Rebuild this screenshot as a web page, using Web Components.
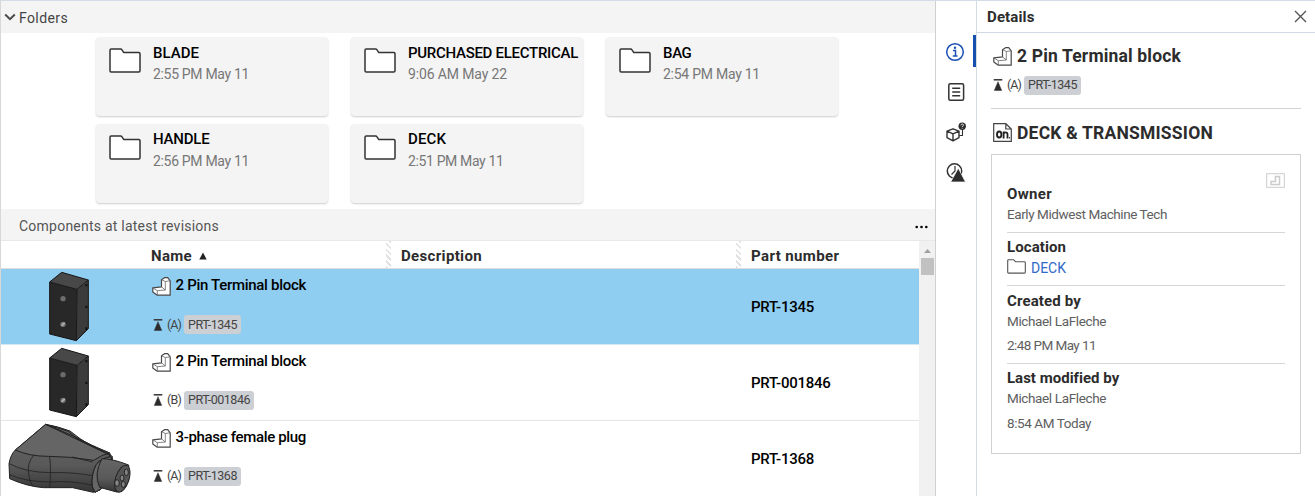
<!DOCTYPE html>
<html lang="en">
<head>
<meta charset="utf-8">
<title>Details</title>
<style>
html,body{margin:0;height:100%;overflow:hidden;background:#fff}
body{font-family:Roboto,"Liberation Sans",sans-serif;color:#2c2c2c}
</style>
</head>
<body>
<doc-app></doc-app>
<script>
function define(name, html, setup) {
  const tpl = document.createElement('template');
  tpl.innerHTML = html;
  customElements.define(name, class extends HTMLElement {
    constructor() {
      super();
      this.attachShadow({mode: 'open'}).append(tpl.content.cloneNode(true));
    }
    connectedCallback() { if (setup) setup(this, this.shadowRoot); }
  });
}

/* Single line of text whose tracking is adjusted to a given width. */
define('fit-text', `<style>
:host{display:block;white-space:nowrap;font-size:13.5px;line-height:20px;flex:none}
:host([kind=strong]){font-size:15px;font-weight:500;color:#000}
:host([kind=head]){font-size:15px;font-weight:700;color:#2c2c2c}
:host([kind=wide]){font-size:14px}
:host([kind=title]){font-size:17.5px;font-weight:700;color:#2c2c2c;line-height:24px}
:host([kind=small]){font-size:12.5px;color:#444}
</style><span><slot></slot></span>`, (host, root) => {
  const w = parseFloat(host.getAttribute('w'));
  const span = root.querySelector('span');
  const natural = span.getBoundingClientRect().width;
  if (w && natural) span.style.letterSpacing = ((w - natural) / host.textContent.length) + 'px';
});

const icons = {
  chevron: ['0 0 12 8', '<path d="M1.2 1.5 6 6.2l4.800-4.700" fill="none" stroke="#4a4a4a" stroke-width="2"/>'],
  folder: ['0 0 32 25', '<path d="M1 2.200Q1 1 2.200 1H11.500Q12.500 1 13 1.900L14.800 4.600H29.800Q31 4.600 31 5.800V22.800Q31 24 29.800 24H2.200Q1 24 1 22.800Z" fill="#fff" stroke="#333" stroke-width="1.500"/>'],
  folderSmall: ['0 0 19 15', '<path d="M.7 1.500Q.7.700 1.500.700H6.600L8.500 2.700H17.500Q18.300 2.700 18.300 3.500V13.300Q18.300 14.100 17.500 14.100H1.500Q.7 14.100.7 13.300Z" fill="#fff" stroke="#555" stroke-width="1.100"/>'],
  part: ['0 0 19 19', '<path d="M.8 10.800 9.500 9.800V2.700L12.500.700H15.700L18.200 3.800V18.200H5.300L.8 15Z" fill="#fff" stroke="#484848" stroke-width="1.200" stroke-linejoin="round"/><path d="M9.500 2.700 13.300 4.500 17.800 3.900M13.300 4.500V13L5.300 13.700.8 10.800M5.300 13.700V18M9.500 9.800 13.300 13" fill="none" stroke="#666" stroke-width=".8"/>'],
  release: ['0 0 10 12', '<path d="M.7.800H9.300" stroke="#333" stroke-width="1.500"/><path d="M5 2.700 8.700 11.400H1.300Z" fill="#2c2c2c" stroke="#2c2c2c" stroke-width=".5"/>'],
  sort: ['0 0 8 8', '<path d="M4 .5 7.700 7.500H.3Z" fill="#222"/>'],
  dots: ['0 0 13 4', '<circle cx="1.700" cy="2" r="1.300"/><circle cx="6.500" cy="2" r="1.300"/><circle cx="11.300" cy="2" r="1.300"/>'],
  close: ['0 0 13 13', '<path d="M1 1 12 12M12 1 1 12" stroke="#555" stroke-width="1.400"/>'],
  info: ['0 0 20 20', '<circle cx="10" cy="10" r="8.300" fill="none" stroke="#1c50b5" stroke-width="1.500"/><path d="M8 8.600H10.500V14M7.800 14.100H12.500" fill="none" stroke="#1c50b5" stroke-width="1.500"/><circle cx="10" cy="5.700" r="1.200" fill="#1c50b5"/>'],
  list: ['0 0 18 20', '<rect x="1.800" y="1.700" width="14.800" height="16.600" rx="1.500" fill="none" stroke="#333" stroke-width="1.500"/><path d="M5.200 6.200H13.200M5.200 10H13.200M5.200 13.700H13.200" stroke="#333" stroke-width="1.400"/>'],
  cube: ['0 0 20 20', '<g fill="none" stroke="#333" stroke-width="1.400" stroke-linejoin="round"><path d="M1 9.200 7 6.800 13 9.200V15.700L7 18.900 1 15.700ZM1 9.200 7 11.800 13 9.200M7 11.800V18.900"/><path d="M13.200 13.500H16.500V7" stroke-width="1.100"/></g><circle cx="16.200" cy="4.200" r="3.700" fill="#2c2c2c"/><path d="M14.900 3.300Q15 2 16.300 2T17.500 3.200Q17.500 4 16.200 4.500V5.200M16.200 5.900V6.700" fill="none" stroke="#fff" stroke-width=".8"/>'],
  history: ['0 0 20 21', '<circle cx="8.500" cy="9" r="7.200" fill="none" stroke="#333" stroke-width="1.500"/><path d="M9 4V9L5.500 12.500" fill="none" stroke="#333" stroke-width="1.200"/><path d="M12.300 6.200 19.500 20H4.700Z" fill="#2c2c2c" stroke="#fff" stroke-width=".7"/>'],
  doc: ['0 0 19 19', '<path d="M.7.700H12.800L18.300 6V18.300H.7ZM12.800.700V6H18.300" fill="#fff" stroke="#444" stroke-width="1.200"/><ellipse cx="6.200" cy="11.500" rx="2.200" ry="3" fill="none" stroke="#222" stroke-width="1.900"/><path d="M10.600 15.400V8.500M10.600 11Q11 9.400 12.700 9.400T14.500 11.200V15.400" fill="none" stroke="#222" stroke-width="1.800"/><circle cx="16.500" cy="14.700" r=".7" fill="#222"/>'],
  thumb: ['0 0 19 15', '<rect x=".7" y=".7" width="17.600" height="13.600" fill="#fff" stroke="#ccc"/><path d="M5 8.500H9.500V3.500H13.500V11.500H5Z" fill="none" stroke="#ccc" stroke-width="1.500"/>'],
  scrollup: ['0 0 8 4', '<path d="M4 0 8 4H0Z" fill="#a0a0a0"/>'],
  block: ['145 213 126 213', '<path d="M150 246 186 217 266 240 232 268Z" fill="#484848"/><path d="M150 246 232 268 230 422 150 402Z" fill="#282828"/><path d="M232 268 266 240V386L230 422Z" fill="#3b3b3b"/><path d="M150 246 232 268 266 240M232 268 230 422M150 246 186 217 266 240V386L230 422 150 402Z" fill="none" stroke="#171717" stroke-width="3"/><circle cx="190" cy="296" r="8" fill="#6c6c6c"/><circle cx="190" cy="373" r="8" fill="#777"/><path d="M186 377 195 368" stroke="#bbb" stroke-width="4"/><path d="M260 252V259M260 317V324M260 382V389" stroke="#111" stroke-width="6"/>'],
  plug: ['24 250 369 210', '<defs><linearGradient id="a" x2="0" y2="1"><stop stop-color="#666"/><stop offset=".6" stop-color="#595959"/><stop offset="1" stop-color="#353535"/></linearGradient></defs><g stroke="#222" stroke-width="3" stroke-linejoin="round"><path d="M137 254Q170 259 210 274L240 297Q270 318 329 340L337 360 300 451 280 458 218 444H130Q80 440 29 417L27 372Q32 344 46 331Z" fill="url(#a)"/><path d="M46 331Q88 350 145 350 210 350 281 362 306 345 329 340 275 318 220 289L137 254Z" fill="#656565"/><path d="M137 254 205 275 230 297 322 341 333 351Q306 354 289 374 273 405 277 440L285 458 307 445 337 373V350Z" fill="none"/><path d="M333 351Q306 354 289 374 273 405 277 440L285 458 307 445 337 373Z" fill="#666"/><path d="M28 372Q75 398 150 399 220 397 276 408M29 405Q73 426 150 427 215 422 278 437M102 346Q80 370 86 403 88 422 97 438M149 350Q154 390 149 443M216 352 278 367" fill="none" stroke-width="2.500"/><path d="M306 357Q336 357 386 376L386 420Q374 453 350 457L299 443Q280 405 306 357Z" fill="url(#a)"/><ellipse cx="367" cy="417" rx="20" ry="42" transform="rotate(18 367 417)" fill="#555"/><g fill="#858585"><ellipse cx="379" cy="398" rx="6" ry="10"/><ellipse cx="366" cy="415" rx="6" ry="9"/><ellipse cx="351" cy="430" rx="7" ry="10"/><ellipse cx="370" cy="434" rx="6" ry="9"/></g></g>']
};
define('ui-icon', `<style>:host{display:block;flex:none}svg{display:block;width:100%;height:100%}</style>`, (host, root) => {
  const [box, body] = icons[host.getAttribute('name')];
  host.style.width = host.getAttribute('w') + 'px';
  host.style.height = host.getAttribute('h') + 'px';
  root.innerHTML += `<svg viewBox="${box}" preserveAspectRatio="none">${body}</svg>`;
});

define('folder-card', `<style>
:host{display:flex;box-sizing:border-box;width:232px;height:79px;border-radius:4px;background:#f4f4f4;box-shadow:0 1px 2px rgba(0,0,0,.2);padding:5.500px 0 0 13px;gap:12px}
ui-icon{margin-top:5.500px}
.date{color:#777;display:block;padding-top:1.500px}
</style><ui-icon name="folder" w="32" h="25"></ui-icon><div><slot></slot><div class="date"><slot name="date"></slot></div></div>`);

define('revision-tag', `<style>
:host{display:flex;align-items:center;height:20px}
ui-icon{margin-right:4px}
.badge{background:#cccfd4;border-radius:3px;height:19px;margin-left:3px;padding:0 4px 0 4px;display:flex;align-items:center}
</style><ui-icon name="release" w="10" h="12"></ui-icon><slot name="rev"></slot><div class="badge"><slot></slot></div>`);

define('part-row', `<style>
:host{display:grid;grid-template-columns:150px 250px 350px 1fr;height:75px;border-bottom:1px solid #e6e6e6}
:host([selected]){background:#8fcdf1;border-bottom-color:#d5e9f5}
.thumb{padding:2px 0 0 7px}
:host(:not([plug])) .thumb{padding-left:47px}
.name{padding:6px 0 0 .500px}
.top{display:flex;gap:5px;height:30px}
.top ui-icon{margin-top:2px}
.tag{padding:9.500px 0 0 1.500px}
:host(:not([selected])) .tag{padding-top:9px}
.num{grid-column:4;display:flex;align-items:center}
</style><div class="thumb"><slot name="thumb"></slot></div><div class="name"><div class="top"><ui-icon name="part" w="19" h="19"></ui-icon><slot></slot></div><div class="tag"><slot name="tag"></slot></div></div><div class="num"><slot name="num"></slot></div>`);

define('folder-section', `<style>
:host{display:block;height:208px}
header{display:flex;align-items:center;gap:3px;height:32px;background:#f4f4f4;padding-left:3px;color:#444}
header fit-text{padding-top:1px}
.grid{display:grid;grid-template-columns:repeat(3,232px);gap:7.500px 23px;padding:4px 0 0 95px}
</style><header><ui-icon name="chevron" w="12" h="8"></ui-icon><fit-text kind="wide" w="49">Folders</fit-text></header>
<div class="grid">
<folder-card><fit-text kind="strong" w="46">BLADE</fit-text><fit-text kind="wide" slot="date" w="96">2:55 PM May 11</fit-text></folder-card>
<folder-card><fit-text kind="strong" w="170">PURCHASED ELECTRICAL</fit-text><fit-text kind="wide" slot="date" w="99">9:06 AM May 22</fit-text></folder-card>
<folder-card><fit-text kind="strong" w="28.500">BAG</fit-text><fit-text kind="wide" slot="date" w="97">2:54 PM May 11</fit-text></folder-card>
<folder-card><fit-text kind="strong" w="56.500">HANDLE</fit-text><fit-text kind="wide" slot="date" w="96">2:56 PM May 11</fit-text></folder-card>
<folder-card><fit-text kind="strong" w="38">DECK</fit-text><fit-text kind="wide" slot="date" w="95.500">2:51 PM May 11</fit-text></folder-card>
</div>`);

define('component-table', `<style>
:host{display:flex;flex-direction:column;height:287px}
header{display:flex;align-items:center;justify-content:space-between;height:31px;background:#f4f4f4;border-bottom:1px solid #e8e8e8;padding:0 7.500px 0 18px;color:#555}
header fit-text{margin-top:3px}header ui-icon{margin-top:4px}
.body{display:flex;flex:1;min-height:0;overflow:hidden}
.table{flex:1;overflow:hidden}
.cols{display:grid;grid-template-columns:150px 235px 6px 9px 335px 6px 9px 1fr;height:27px;border-bottom:1px solid #ddd;align-items:center}
.cols fit-text{margin-top:3px}
.name{display:flex;gap:7px;align-items:center;grid-column:2}.name ui-icon{margin-top:3px}
.grip{align-self:stretch;margin-right:1px;background:repeating-linear-gradient(45deg,#e2e2e2 0 1.500px,#fff 1.500px 4.200px)}
.desc{grid-column:5}.part{grid-column:8}
.scroll{width:16px;background:#f1f1f1;display:flex;flex-direction:column;align-items:center;padding-top:8px;gap:5px}
.handle{width:13px;height:17px;background:#c1c1c1}
</style><header><fit-text kind="wide" w="200">Components at latest revisions</fit-text><ui-icon name="dots" w="13" h="4"></ui-icon></header>
<div class="body"><div class="table">
<div class="cols"><div class="name"><fit-text kind="head" w="41">Name</fit-text><ui-icon name="sort" w="8" h="8"></ui-icon></div><div class="grip"></div><fit-text class="desc" kind="head" w="81">Description</fit-text><div class="grip" style="grid-column:6"></div><fit-text class="part" kind="head" w="88.500">Part number</fit-text></div>
<part-row selected><ui-icon slot="thumb" name="block" w="42" h="71"></ui-icon><fit-text kind="strong" w="130.500">2 Pin Terminal block</fit-text><revision-tag slot="tag"><fit-text slot="rev" kind="small" w="14">(A)</fit-text><fit-text kind="small" w="49">PRT-1345</fit-text></revision-tag><fit-text slot="num" kind="strong" w="63">PRT-1345</fit-text></part-row>
<part-row><ui-icon slot="thumb" name="block" w="42" h="71"></ui-icon><fit-text kind="strong" w="130.500">2 Pin Terminal block</fit-text><revision-tag slot="tag"><fit-text slot="rev" kind="small" w="14">(B)</fit-text><fit-text kind="small" w="62">PRT-001846</fit-text></revision-tag><fit-text slot="num" kind="strong" w="79.500">PRT-001846</fit-text></part-row>
<part-row plug><ui-icon slot="thumb" name="plug" w="123" h="70"></ui-icon><fit-text kind="strong" w="130.500">3-phase female plug</fit-text><revision-tag slot="tag"><fit-text slot="rev" kind="small" w="14">(A)</fit-text><fit-text kind="small" w="49">PRT-1368</fit-text></revision-tag><fit-text slot="num" kind="strong" w="63">PRT-1368</fit-text></part-row>
</div><div class="scroll"><ui-icon name="scrollup" w="7" h="4"></ui-icon><div class="handle"></div></div></div>`);

define('side-rail', `<style>
:host{display:flex;flex-direction:column;width:40px}
.item{box-sizing:border-box;height:40px;display:flex;align-items:center;padding-left:10px}
.first{margin-top:31px;position:relative;padding-left:8.500px}
.first::after{content:"";position:absolute;right:0;top:3px;width:3px;height:32px;background:#1650ae}
.doc{padding-left:11px}
</style><div class="item first"><ui-icon name="info" w="20" h="20"></ui-icon></div>
<div class="item doc"><ui-icon name="list" w="18" h="20"></ui-icon></div>
<div class="item"><ui-icon name="cube" w="20" h="20"></ui-icon></div>
<div class="item"><ui-icon name="history" w="20" h="21"></ui-icon></div>`);

define('detail-field', `<style>
:host{display:block;box-sizing:border-box;border-bottom:1px solid #d6d6d6;color:#606060}
:host([last]){border:0}
</style><slot></slot>`);

define('details-panel', `<style>
:host{display:flex;flex-direction:column;flex:1;border-left:1px solid #d3dde8;box-sizing:border-box}
header{display:flex;justify-content:space-between;align-items:center;height:31px;border-bottom:1px solid #cddae6;padding:0 8px 0 10px}
.content{padding:0 14px}
.title{display:flex;gap:5px;align-items:center;height:24px}
.one{padding:11px 0 0 2px}
.tag{padding:7px 0 14px 2px;border-bottom:1px solid #d3d3d3;height:19px}
.two{padding:12px 0 0 2px;height:24px}
.two ui-icon{margin-top:-1px}
.card{box-sizing:border-box;height:300px;margin-top:9px;border:1px solid #d0d0d0;padding:18px 15px 0 15px}
.thumb{display:flex;justify-content:flex-end;height:11px}
.loc{display:flex;gap:5px;color:#3069c8}
.loc ui-icon{margin-top:1.500px}
.loc fit-text{padding-top:1px}
</style><header><fit-text kind="head" w="47.500">Details</fit-text><ui-icon name="close" w="13" h="13"></ui-icon></header>
<div class="content">
<div class="title one"><ui-icon name="part" w="19" h="19"></ui-icon><fit-text kind="title" w="164">2 Pin Terminal block</fit-text></div>
<div class="tag"><revision-tag><fit-text slot="rev" kind="small" w="14">(A)</fit-text><fit-text kind="small" w="49">PRT-1345</fit-text></revision-tag></div>
<div class="title two"><ui-icon name="doc" w="19" h="19"></ui-icon><fit-text kind="title" w="196">DECK &amp; TRANSMISSION</fit-text></div>
<div class="card"><div class="thumb"><ui-icon name="thumb" w="19" h="15"></ui-icon></div>
<detail-field style="height:49px"><fit-text kind="head" w="45">Owner</fit-text><fit-text w="160">Early Midwest Machine Tech</fit-text></detail-field>
<detail-field style="height:53px;padding-top:4px"><fit-text kind="head" w="59">Location</fit-text><div class="loc"><ui-icon name="folderSmall" w="19" h="15"></ui-icon><fit-text kind="wide" w="35">DECK</fit-text></div></detail-field>
<detail-field style="height:78px;padding-top:4.500px"><fit-text kind="head" w="74">Created by</fit-text><fit-text w="99">Michael LaFleche</fit-text><fit-text w="89" style="margin-top:4px">2:48 PM May 11</fit-text></detail-field>
<detail-field last style="padding-top:4px"><fit-text kind="head" w="112">Last modified by</fit-text><fit-text w="99">Michael LaFleche</fit-text><fit-text w="84" style="margin-top:5px">8:54 AM Today</fit-text></detail-field>
</div></div>`);

define('doc-app', `<style>
:host{display:flex;box-sizing:border-box;width:1315px;height:496px;border-top:1px solid #d3dce8;border-left:1px solid #d8d8d8;overflow:hidden}
main{width:934px;border-right:1px solid #d0d0d0;flex:none}
</style><main><folder-section></folder-section><component-table></component-table></main><side-rail></side-rail><details-panel></details-panel>`);
</script>
</body>
</html>
